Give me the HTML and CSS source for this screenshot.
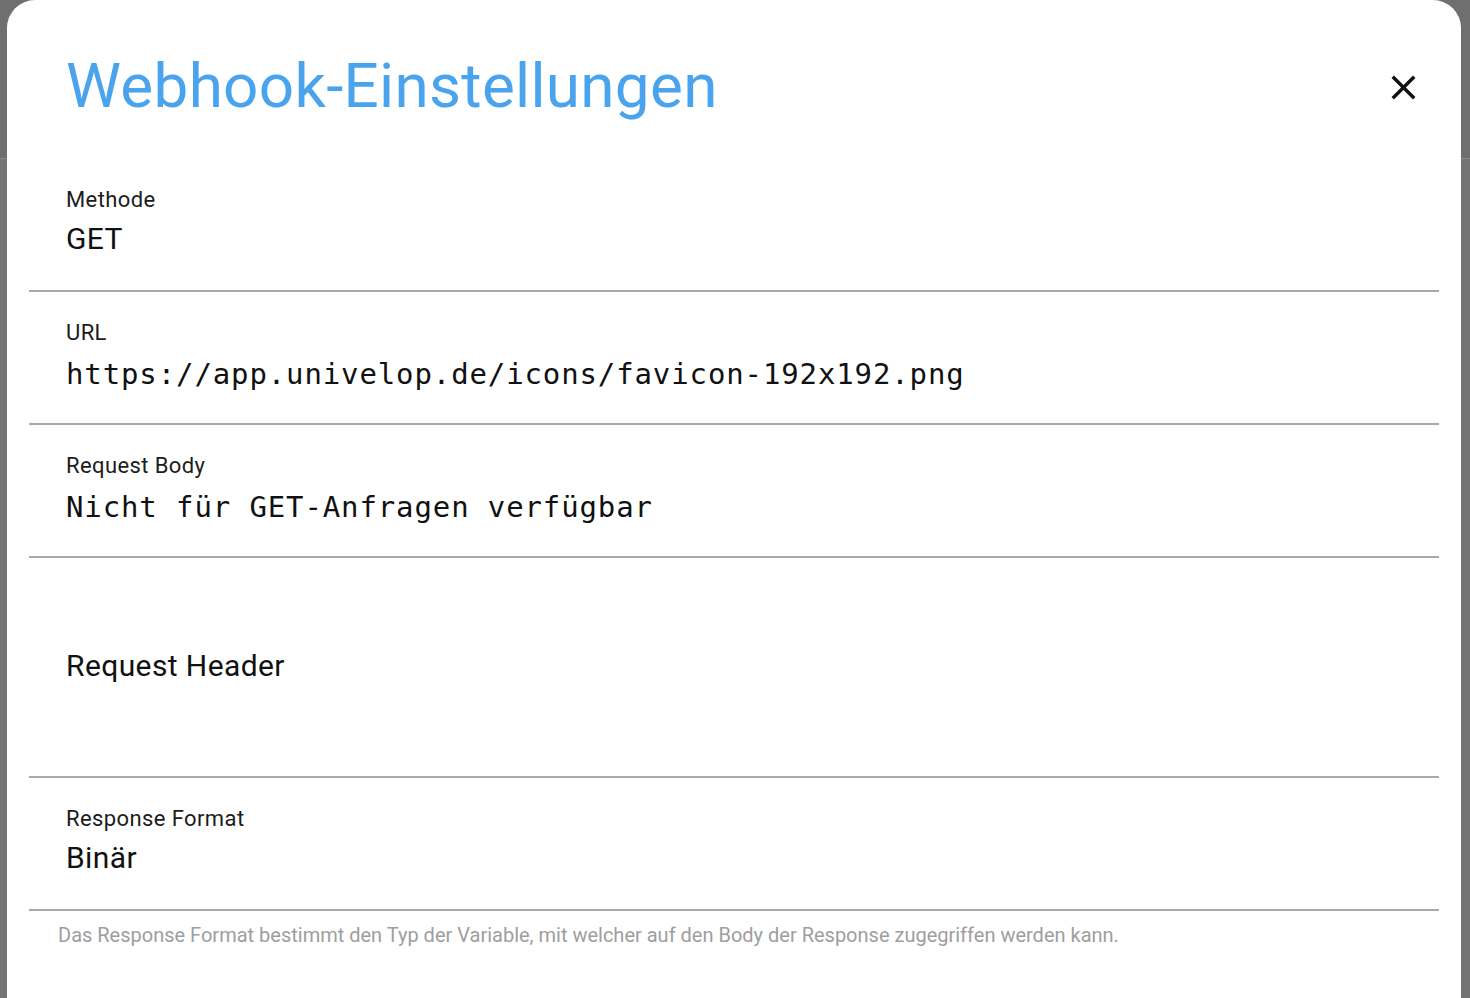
FILE: index.html
```html
<!DOCTYPE html>
<html lang="de">
<head>
<meta charset="utf-8">
<title>Webhook-Einstellungen</title>
<link rel="stylesheet" href="styles.css">
</head>
<body>
<div class="backdrop">
  <div class="app-bar"></div>
  <div class="app-body"></div>
</div>
<div class="dialog">
  <div class="dialog-header">
    <h1 class="dialog-title">Webhook-Einstellungen</h1>
    <button class="close-btn" aria-label="Schließen">
      <svg viewBox="0 0 24 24" width="41" height="41"><path d="M19 6.41L17.59 5 12 10.59 6.41 5 5 6.41 10.59 12 5 17.59 6.41 19 12 13.41 17.59 19 19 17.59 13.41 12z" fill="#111"/></svg>
    </button>
  </div>
  <div class="field">
    <div class="field-label">Methode</div>
    <div class="field-value">GET</div>
  </div>
  <div class="field">
    <div class="field-label">URL</div>
    <div class="field-value mono">https://app.univelop.de/icons/favicon-192x192.png</div>
  </div>
  <div class="field">
    <div class="field-label">Request Body</div>
    <div class="field-value mono">Nicht für GET-Anfragen verfügbar</div>
  </div>
  <div class="field field-tall">
    <div class="field-value">Request Header</div>
  </div>
  <div class="field">
    <div class="field-label">Response Format</div>
    <div class="field-value">Binär</div>
  </div>
  <p class="helper">Das Response Format bestimmt den Typ der Variable, mit welcher auf den Body der Response zugegriffen werden kann.</p>
</div>
</body>
</html>
```
FILE: styles.css
```css
html, body {
  margin: 0;
  padding: 0;
  height: 100%;
  overflow: hidden;
}
body {
  font-family: Roboto, "Noto Sans", sans-serif;
  background: #747474;
  position: relative;
}
.backdrop {
  display: flex;
  flex-direction: column;
  height: 100%;
}
.app-bar {
  height: 158px;
  background: #6f6f6f;
  border-bottom: 1px solid #888888;
}
.app-body {
  flex: 1;
  background: #747474;
}
.dialog {
  position: absolute;
  top: 0;
  left: 7px;
  right: 9px;
  bottom: -40px;
  background: #ffffff;
  border-radius: 28px 28px 0 0;
  padding: 0 22px;
  box-sizing: border-box;
}
.dialog-header {
  height: 159px;
  display: flex;
  align-items: flex-start;
  justify-content: space-between;
  padding: 49px 15px 0 37px;
  box-sizing: border-box;
}
.dialog-title {
  margin: 0;
  font-family: Roboto, sans-serif;
  font-weight: 400;
  font-size: 62px;
  line-height: 74px;
  letter-spacing: 0.3px;
  color: #4aa4ed;
}
.close-btn {
  margin-top: 18px;
  padding: 0;
  border: 0;
  background: none;
  width: 41px;
  height: 41px;
  display: flex;
  cursor: pointer;
}
.field {
  padding: 27px 37px 31px;
  border-bottom: 2px solid #a9a9a9;
}
.field-label {
  font-size: 22px;
  line-height: 28px;
  letter-spacing: 0.4px;
  color: #1c1c1c;
}
.field-value {
  margin-top: 5px;
  font-size: 30px;
  line-height: 40px;
  letter-spacing: 0.4px;
  color: #111111;
}
.field-value.mono {
  font-family: "DejaVu Sans Mono", "Liberation Mono", monospace;
  font-size: 29px;
  letter-spacing: 0.88px;
  margin-top: 7px;
  margin-bottom: -2px;
}
.field-tall {
  padding-top: 88px;
  padding-bottom: 90px;
}
.field-tall .field-value {
  margin-top: 0;
}
.helper {
  margin: 11px 0 0;
  padding: 0 29px;
  font-size: 20px;
  line-height: 26px;
  color: #9e9e9e;
}
```
